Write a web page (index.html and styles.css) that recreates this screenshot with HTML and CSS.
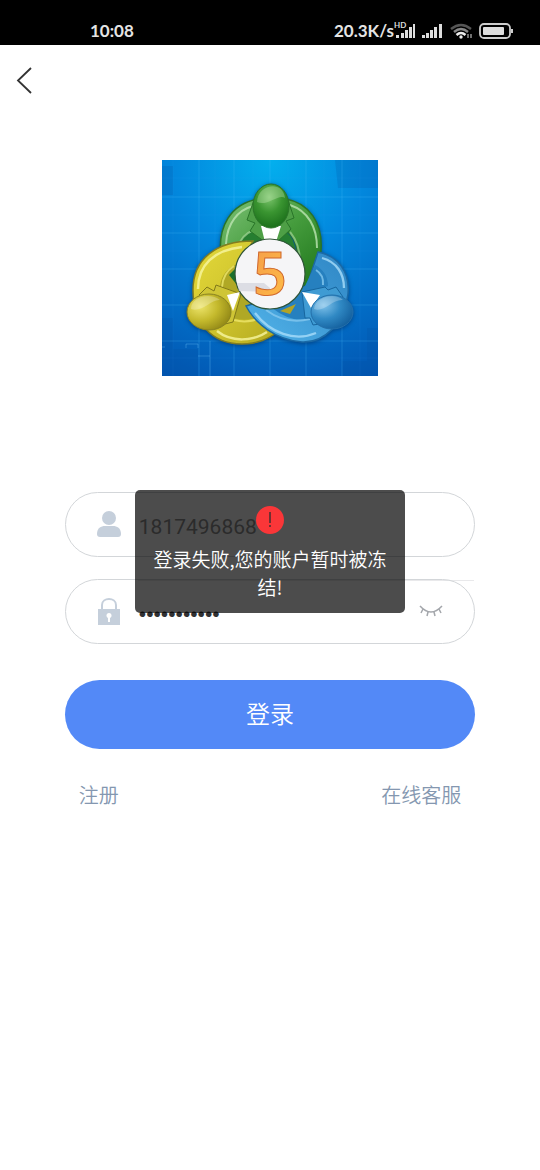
FILE: index.html
```html
<!DOCTYPE html>
<html lang="zh-CN">

<head>
    <meta charset="UTF-8">
    <meta name="viewport" content="width=device-width, initial-scale=1.0">
    <title>登录</title>
    <link rel="stylesheet" href="styles.css">
</head>

<body>
    <div class="statusbar">
        <span class="time">10:08</span>
        <div class="status-icons">
            <span>20.3K/s</span>
            <svg width="85" height="20" viewBox="0 0 85 20" aria-hidden="true">
                <g fill="#ddd">
                    <path d="M2 15h3v3h-3zM7 13h3v5h-3zM11 10h3v8h-3zM15 7h3v11h-3zM19 4h2v14h-2z" />
                    <path d="M28 15h3v3h-3zM32 13h3v5h-3zM36 10h3v8h-3zM40 7h3v11h-3zM45 4h3v14h-3z" />
                </g>
                <text class="hd" x="0" y="8">HD</text>
                <g fill="none" stroke-width="2.4">
                    <path d="M57 9Q67 1 77 9" stroke="#555" />
                    <path d="M60 12Q67 6 74 12" stroke="#888" />
                    <path d="M62.5 15Q67 11 71.500 15" stroke="#eee" />
                </g>
                <circle cx="67" cy="17" r="1.700" fill="#eee" />
                <path d="M74 14v4M77 14v4" stroke="#aaa" stroke-width="1.300" />
            </svg>
            <svg class="battery" width="35" height="16" viewBox="0 0 35 16" aria-hidden="true">
                <rect x="1" y="1" width="30" height="14" rx="4" fill="none" stroke="#ccc" stroke-width="1.800" />
                <rect x="4" y="4" width="21" height="8" rx="1" fill="#ddd" />
                <path d="M33 6v4" stroke="#ccc" stroke-width="2" />
            </svg>
        </div>
    </div>

    <header class="nav">
        <button class="back" type="button" aria-label="返回">
            <svg width="18" height="28" viewBox="0 0 18 28">
                <path d="M15 2L2 14.500L15 27" fill="none" stroke="#333" stroke-width="1.800" />
            </svg>
        </button>
    </header>

    <main class="login">
        <svg class="logo" viewBox="0 0 216 216" role="img" aria-label="MetaTrader 5">
            <defs>
                <radialGradient id="sky" cx=".5" cy="0" r="1.100">
                    <stop offset="0" stop-color="#03b0ee" />
                    <stop offset=".4" stop-color="#0288de" />
                    <stop offset="1" stop-color="#0256b2" />
                </radialGradient>
                <linearGradient id="green" x1="0" y1="0" x2="1" y2="1">
                    <stop offset="0" stop-color="#7cc176" />
                    <stop offset=".5" stop-color="#459c3d" />
                    <stop offset="1" stop-color="#1e751a" />
                </linearGradient>
                <linearGradient id="yellow" x1="0" y1="0" x2="1" y2="1">
                    <stop offset="0" stop-color="#e4d93a" />
                    <stop offset=".5" stop-color="#d0c52e" />
                    <stop offset="1" stop-color="#b3a91f" />
                </linearGradient>
                <linearGradient id="blue" x1="0" y1="1" x2="1" y2="0">
                    <stop offset="0" stop-color="#53b5ea" />
                    <stop offset=".5" stop-color="#3f9bd6" />
                    <stop offset="1" stop-color="#2f86c4" />
                </linearGradient>
                <radialGradient id="greenHead" cx=".45" cy=".3" r=".7">
                    <stop offset="0" stop-color="#7cc56d" />
                    <stop offset=".5" stop-color="#3a9531" />
                    <stop offset="1" stop-color="#1c701b" />
                </radialGradient>
                <radialGradient id="yellowHead" cx=".3" cy=".35" r=".8">
                    <stop offset="0" stop-color="#ece46a" />
                    <stop offset=".5" stop-color="#c4b92c" />
                    <stop offset="1" stop-color="#8b8113" />
                </radialGradient>
                <radialGradient id="blueHead" cx=".3" cy=".3" r=".8">
                    <stop offset="0" stop-color="#80c2ea" />
                    <stop offset=".5" stop-color="#3089c4" />
                    <stop offset="1" stop-color="#125d9b" />
                </radialGradient>
                <linearGradient id="five" x1="0" y1="0" x2="1" y2="1">
                    <stop offset="0" stop-color="#f49a4a" />
                    <stop offset="1" stop-color="#ffbf45" />
                </linearGradient>
            </defs>

            <rect width="216" height="216" fill="url(#sky)" />
            <path d="M0 158h11v31h25v27H0zM216 168h-11v33h-25v15h36zM0 35h11V6H0zM173 0h43v28h-40z" fill="#034e9f" opacity=".2" />
            <path d="M37 0V216M72 0V216M108 0V216M144 0V216M180 0V216M0 37H216M0 73H216M0 109H216M0 145H216M0 181H216" fill="none" stroke="#59bfff" stroke-width=".8" opacity=".3" />
            <path d="M11 0V216M53 0V90M91 0V60M126 0V50M162 0V90M198 0V216M0 18H216M0 55H60M156 55H216M0 91H40M186 91H216M0 198H216" fill="none" stroke="#59bfff" stroke-width=".6" opacity=".12" />
            <path d="M0 187h3M24 188v-4h12v4M48 196V181M36 196h12v20" fill="none" stroke="#79caff" stroke-width=".8" opacity=".4" />

            <g class="figures">
                <!-- green figure -->
                <path d="M59 98C55 66 69 44 96 39L124 39C147 43 161 63 159 90C158 106 153 117 146 126L133 123C139 100 137 75 120 69L98 69C83 73 77 84 77 98Z" fill="url(#green)" stroke="#2a7428" stroke-width="1.500" />
                <path d="M76 92C77 78 86 70 98 70H119C132 73 137 90 134 118L100 129L70 129Z" fill="#267e31" />
                <path d="M64 84C65 63 76 50 91 46M128 45C146 51 155 67 155 88" fill="none" stroke="#bde5b3" stroke-width="2" opacity=".8" />
                <path d="M76 88C78 79 84 73 92 70M128 72Q141 88 137 113" fill="none" stroke="#a4d699" stroke-width="2" opacity=".7" />
                <path d="M92 40L85 60L93 63L88 71L103 82L109 68L115 82L129 69L124 61L132 58L126 40Z" fill="#4e9f46" stroke="#297529" />
                <path d="M99 66L119 66L114 82H103Z" fill="#fff" />
                <ellipse cx="109" cy="46" rx="18" ry="22" fill="url(#greenHead)" stroke="#2a7428" />
                <path d="M95 42C96 24 121 20 123 38C117 33 105 47 95 42Z" fill="#dbf5ca" opacity=".3" />

                <!-- yellow figure -->
                <path d="M91 81C54 81 31 99 31 130C31 162 49 184 80 184C96 184 106 179 117 171L99 138L78 104Z" fill="url(#yellow)" stroke="#837d20" stroke-width="1.500" />
                <path d="M80 87C52 90 36 105 36 129M55 171C70 183 91 181 105 172" fill="none" stroke="#f8f6a1" stroke-width="2.500" opacity=".8" />
                <path d="M78 103Q60 109 58 126L79 134L71 158Q88 163 104 153L92 130Z" fill="#b0a825" />
                <path d="M72 106Q61 113 60 127M72 160Q86 164 100 157" fill="none" stroke="#eee66c" stroke-width="2" opacity=".8" />
                <path d="M67 115L75 125L73 109Z" fill="#196f2b" />
                <path d="M37 135L45 127L52 131L54 125L79 134L71 162L59 165L49 150Z" fill="#cfc535" stroke="#80781a" />
                <path d="M65 135L78 132L71 151Z" fill="#fff" />
                <ellipse cx="47" cy="152" rx="22" ry="18" fill="url(#yellowHead)" stroke="#8a8321" />
                <path d="M29 149C29 136 49 132 58 140C49 139 40 153 29 149Z" fill="#fff" opacity=".25" />

                <!-- blue figure -->
                <path d="M156 92C177 96 188 113 186 134C182 164 162 183 140 182C113 180 93 163 84 146L103 140L145 126Z" fill="url(#blue)" stroke="#1b69a5" stroke-width="1.500" />
                <path d="M160 98C175 102 182 114 182 128M93 153C108 173 133 182 154 173" fill="none" stroke="#a9ddfa" stroke-width="2.300" opacity=".8" />
                <path d="M153 105Q166 112 166 126L145 134L150 157Q132 165 110 148L143 126Z" fill="#2680bf" />
                <path d="M118 151L134 144L128 154Z" fill="#b3a324" />
                <path d="M104 150Q124 165 148 159M154 110Q162 115 161 125" fill="none" stroke="#85c8ef" stroke-width="2" opacity=".8" />
                <path d="M140 132L163 127L166 130L174 127L181 137L170 162L151 165L148 158L143 158Z" fill="#3f9bd3" stroke="#17669f" />
                <path d="M140 132L158 135L149 148Z" fill="#fff" />
                <ellipse cx="170" cy="152" rx="21" ry="17" fill="url(#blueHead)" stroke="#2470aa" />
                <path d="M152 149C153 136 174 132 181 140C170 139 162 153 152 149Z" fill="#fff" opacity=".25" />
            </g>

            <circle cx="108" cy="114" r="35" fill="#f5f5f7" stroke="#305538" stroke-width="1.200" />
            <path d="M75 123H102L108 128V132L77 131Z" fill="#d6d7df" opacity=".8" />
            <text class="logo-digit" x="108" y="135" text-anchor="middle">5</text>
        </svg>

        <form class="form">
            <label class="field account">
                <svg width="26" height="28" viewBox="0 0 26 28" fill="#c5cfdb" aria-hidden="true">
                    <circle cx="13" cy="7" r="7" />
                    <path d="M1 23C1 17 5 15 9 15H17C21 15 25 17 25 23Q25 26 22 26H4Q1 26 1 23Z" />
                </svg>
                <input type="text" value="1817496868" aria-label="账号">
            </label>
            <label class="field">
                <svg width="26" height="28" viewBox="0 0 26 28" aria-hidden="true">
                    <path d="M6 12V7C6 -1 20 -1 20 7V12" fill="none" stroke="#c5cfdb" stroke-width="2" />
                    <rect x="2" y="11" width="22" height="16" fill="#c5cfdb" />
                    <circle cx="13" cy="17.500" r="2.500" fill="#fff" />
                    <path d="M13 18v6" stroke="#fff" stroke-width="2" />
                </svg>
                <input type="password" value="12345678901" aria-label="密码">
                <button class="eye" type="button" aria-label="显示密码">
                    <svg width="24" height="14" viewBox="0 0 24 14" fill="none" stroke="#a3a6ab" stroke-width="1.500">
                        <path d="M1 1Q12 13 23 1M4 4L2 8M9 7L8 11M15 7L16 11M20 4L22 8" />
                    </svg>
                </button>
            </label>
            <button class="submit" type="submit">登录</button>
            <div class="links">
                <a href="#">注册</a>
                <a href="#">在线客服</a>
            </div>
        </form>
    </main>

    <div class="toast" role="alert">
        <svg width="28" height="28" viewBox="0 0 28 28" aria-hidden="true">
            <circle cx="14" cy="14" r="14" fill="#fa3638" />
            <path d="M14 6v11M14 19v2" stroke="#713031" stroke-width="2" />
        </svg>
        <p>登录失败,您的账户暂时被冻结!</p>
    </div>
</body>

</html>
```
FILE: styles.css
```css
* {
    box-sizing: border-box;
}

body {
    margin: 0;
    background-color: #fff;
    font-family: "Noto Sans CJK SC", sans-serif;
    font-weight: 350;
}

button {
    border: none;
    padding: 0;
    background: none;
    font-family: inherit;
    font-weight: inherit;
}

svg {
    display: block;
    flex: none;
}

.statusbar {
    display: flex;
    justify-content: space-between;
    height: 45px;
    padding: 20px 26px 0 90px;
    background-color: #000;
    color: #e4e4e4;
    font-family: Lato, sans-serif;
    font-size: 17px;
    font-weight: 700;
    line-height: 22px;
}

.status-icons {
    display: flex;
}

.battery {
    margin-top: 3px;
}

.hd {
    fill: #ddd;
    font-family: Lato, sans-serif;
    font-size: 8px;
    font-weight: 700;
}

.nav {
    height: 71px;
    padding: 21px 16px;
}

.back {
    display: block;
}

.login {
    padding: 44px 12% 0;
}

.logo {
    width: 216px;
    height: 216px;
    margin: 0 auto;
}

.figures {
    filter: drop-shadow(0 1px 2px rgba(0, 40, 90, .6));
}

.logo-digit {
    fill: url(#five);
    stroke: #d0682d;
    stroke-width: 1px;
    font-family: "Open Sans", sans-serif;
    font-size: 60px;
    font-weight: 600;
}

.form {
    display: flex;
    flex-direction: column;
    margin-top: 116px;
}

.field {
    position: relative;
    display: flex;
    align-items: center;
    height: 65px;
    margin-bottom: 22px;
    padding: 0 31px 0 30px;
    border: 1px solid #d3d6d9;
    border-radius: 33px;
}

/* thin rule under the account row */
.account::after {
    content: "";
    position: absolute;
    right: 0;
    bottom: -25px;
    left: 72px;
    height: 1px;
    background-color: #e9e9eb;
}

.field input {
    flex: 1;
    min-width: 0;
    margin-left: 17px;
    padding: 4px 0 0;
    border: none;
    outline: none;
    background: none;
    color: #303133;
    font-family: Roboto, sans-serif;
    font-size: 21px;
}

.field input[type="text"] {
    color: #909090;
}

.field input[type="password"] {
    font-family: "Liberation Sans", sans-serif;
}

.submit {
    height: 69px;
    margin-top: 14px;
    padding-bottom: 4px;
    border-radius: 35px;
    background-color: #5389f7;
    color: #fff;
    font-size: 24px;
}

.links {
    display: flex;
    justify-content: space-between;
    padding: 31px 14px;
}

.links a {
    color: #8497b0;
    font-size: 20px;
    line-height: 30px;
    text-decoration: none;
}

.toast {
    position: absolute;
    top: 490px;
    left: 25%;
    width: 50%;
    padding: 16px 15px 12px;
    border-radius: 5px;
    background-color: rgba(0, 0, 0, .7);
    color: #fff;
    font-size: 19px;
    line-height: 28px;
    text-align: center;
}

.toast svg {
    margin: 0 auto;
}

.toast p {
    margin: 11px 0 0;
}
```
